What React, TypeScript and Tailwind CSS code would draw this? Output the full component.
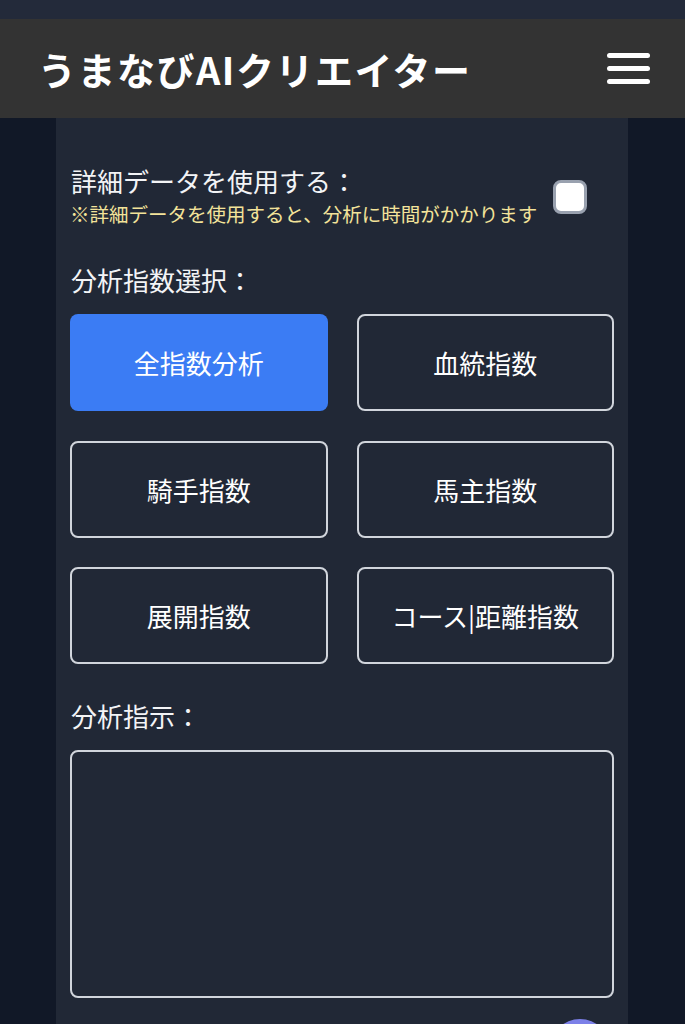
import React, { useState } from "react";

const indices = [
  "全指数分析",
  "血統指数",
  "騎手指数",
  "馬主指数",
  "展開指数",
  "コース|距離指数",
];

export default function App() {
  const [selected, setSelected] = useState("全指数分析");
  const [detail, setDetail] = useState(false);
  const [note, setNote] = useState("");

  return (
    <div
      className="min-h-screen bg-[#111827] text-white overflow-hidden"
      style={{ fontFamily: '"Noto Sans CJK JP", "Noto Sans", sans-serif' }}
    >
      {/* Top strip */}
      <div className="h-[19px] bg-[#232a3a]" />

      {/* Header */}
      <header className="h-[99px] bg-[#333333] flex items-center justify-between pl-[38px] pr-[35px]">
        <h1 className="text-[38px] font-bold tracking-[1.5px] leading-none">
          うまなびAIクリエイター
        </h1>
        <button className="flex flex-col gap-[8px] w-[43px]">
          <span className="h-[5px] rounded-full bg-white" />
          <span className="h-[5px] rounded-full bg-white" />
          <span className="h-[5px] rounded-full bg-white" />
        </button>
      </header>

      {/* Card */}
      <div className="mx-[56px] w-[572px] bg-[#212836] px-[14px] pt-[46px] pb-[40px]">
        {/* Detail data toggle */}
        <div className="flex items-center gap-4">
          <div>
            <div className="text-[26px] leading-[34px] text-gray-100 pl-[1px]">
              詳細データを使用する：
            </div>
            <div className="text-[19.5px] leading-[32px] text-[#f3e39a]">
              ※詳細データを使用すると、分析に時間がかかります
            </div>
          </div>
          <button
            onClick={() => setDetail(!detail)}
            className="w-[34px] h-[34px] rounded-[8px] bg-white border-[3px] border-gray-400 shrink-0"
          >
            {detail && <span className="text-black text-xl">✓</span>}
          </button>
        </div>

        {/* Index select */}
        <div className="mt-[33px] text-[26px] leading-[34px] text-gray-100 pl-[1px]">
          分析指数選択：
        </div>
        <div className="mt-[17px] grid grid-cols-2 gap-x-[29px] gap-y-[29.5px]">
          {indices.map((name) => (
            <button
              key={name}
              onClick={() => setSelected(name)}
              className={
                selected === name
                  ? "h-[97px] rounded-[8px] bg-[#3b7cf4] text-[26px] text-white"
                  : "h-[97px] rounded-[8px] border-2 border-gray-300 text-[26px] text-white"
              }
            >
              {name}
            </button>
          ))}
        </div>

        {/* Instruction */}
        <div className="mt-[35px] text-[26px] leading-[34px] text-gray-100 pl-[1px]">
          分析指示：
        </div>
        <textarea
          value={note}
          onChange={(e) => setNote(e.target.value)}
          className="mt-[17px] block w-full h-[248px] rounded-[8px] border-2 border-gray-300 bg-[#212836] resize-none p-3 text-white"
        />

        <div className="flex justify-end mt-[21px] pr-[4px]">
          <div className="w-[60px] h-[60px] rounded-full bg-[#7c80e8]" />
        </div>
      </div>
    </div>
  );
}
